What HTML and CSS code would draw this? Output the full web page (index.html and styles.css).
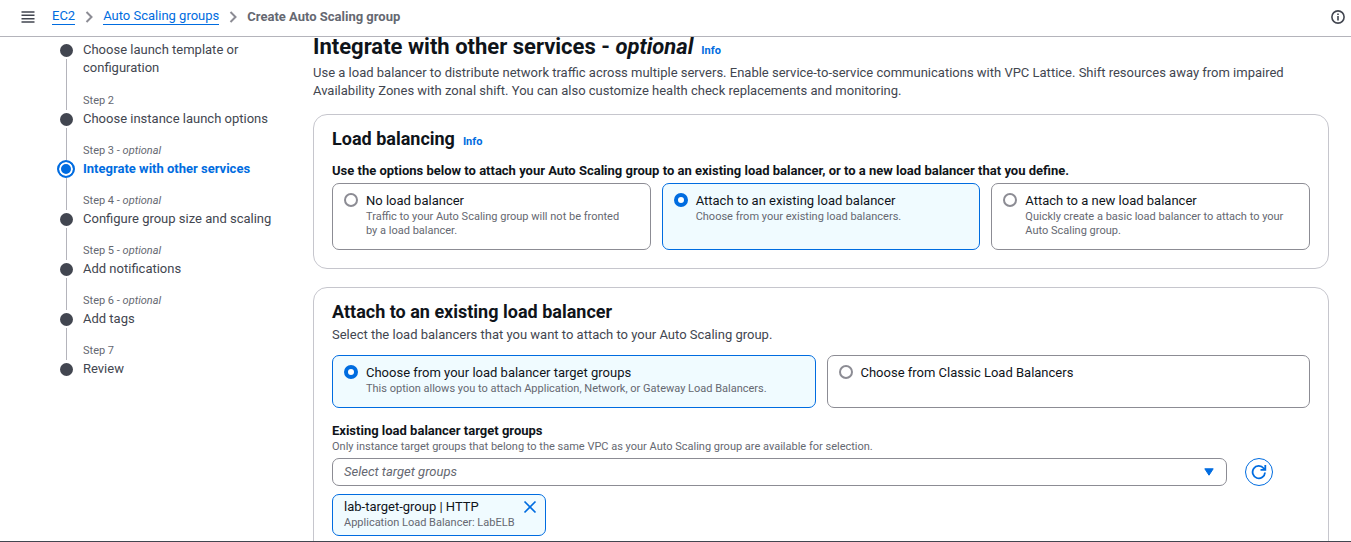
FILE: index.html
```html
<!DOCTYPE html>
<html lang="en">
<head>
<meta charset="utf-8">
<meta name="viewport" content="width=device-width, initial-scale=1">
<title>Create Auto Scaling group</title>
<link rel="stylesheet" href="styles.css">
</head>
<body>
<header class="topbar">
  <button class="icon-button" type="button" aria-label="Open navigation">
    <svg width="14" height="14" viewBox="0 0 14 14"><path d="M.500 2h13M.500 5.300h13M.500 8.700h13M.500 12h13" stroke="#424650" stroke-width="1.500"/></svg>
  </button>
  <nav aria-label="Breadcrumbs">
    <ol class="crumbs">
      <li><a href="#">EC2</a></li>
      <li><svg class="chevron" width="8" height="12" viewBox="0 0 8 12"><path d="M1.500 1l5 5-5 5"/></svg><a href="#">Auto Scaling groups</a></li>
      <li><svg class="chevron" width="8" height="12" viewBox="0 0 8 12"><path d="M1.500 1l5 5-5 5"/></svg><span class="crumb-current" aria-current="page">Create Auto Scaling group</span></li>
    </ol>
  </nav>
  <button class="icon-button info-button" type="button" aria-label="Open help panel">
    <svg width="14" height="14" viewBox="0 0 14 14"><circle cx="7" cy="7" r="6.100" fill="none" stroke="#424650" stroke-width="1.600"/><path d="M7 6v4.500M7 3.500v1.500" stroke="#424650" stroke-width="1.600"/></svg>
  </button>
</header>

<div class="layout">
  <nav class="wizard" aria-label="Steps">
    <ol class="steps">
      <li class="step"><span class="dot"></span><a class="step-title" href="#">Choose launch template or configuration</a><span class="line"></span></li>
      <li class="step"><span class="line"></span><span class="step-label">Step 2</span><span class="dot"></span><a class="step-title" href="#">Choose instance launch options</a><span class="line"></span></li>
      <li class="step current"><span class="line"></span><span class="step-label">Step 3 - <i>optional</i></span><span class="dot"></span><a class="step-title" href="#" aria-current="step">Integrate with other services</a><span class="line"></span></li>
      <li class="step"><span class="line"></span><span class="step-label">Step 4 - <i>optional</i></span><span class="dot"></span><a class="step-title" href="#">Configure group size and scaling</a><span class="line"></span></li>
      <li class="step"><span class="line"></span><span class="step-label">Step 5 - <i>optional</i></span><span class="dot"></span><a class="step-title" href="#">Add notifications</a><span class="line"></span></li>
      <li class="step"><span class="line"></span><span class="step-label">Step 6 - <i>optional</i></span><span class="dot"></span><a class="step-title" href="#">Add tags</a><span class="line"></span></li>
      <li class="step"><span class="line"></span><span class="step-label">Step 7</span><span class="dot"></span><a class="step-title" href="#">Review</a></li>
    </ol>
  </nav>

  <main class="content">
    <div class="page-head">
      <div class="title-row"><h1>Integrate with other services - <i>optional</i></h1><a class="info" href="#">Info</a></div>
      <p>Use a load balancer to distribute network traffic across multiple servers. Enable service-to-service communications with VPC Lattice. Shift resources away from impaired Availability Zones with zonal shift. You can also customize health check replacements and monitoring.</p>
    </div>

    <section class="card">
      <div class="title-row"><h2>Load balancing</h2><a class="info" href="#">Info</a></div>
      <fieldset class="options">
        <legend>Use the options below to attach your Auto Scaling group to an existing load balancer, or to a new load balancer that you define.</legend>
        <div class="tiles">
          <label class="tile"><input type="radio" name="balancer"><span class="tile-title">No load balancer</span><span class="hint">Traffic to your Auto Scaling group will not be fronted by a load balancer.</span></label>
          <label class="tile"><input type="radio" name="balancer" checked><span class="tile-title">Attach to an existing load balancer</span><span class="hint">Choose from your existing load balancers.</span></label>
          <label class="tile"><input type="radio" name="balancer"><span class="tile-title">Attach to a new load balancer</span><span class="hint">Quickly create a basic load balancer to attach to your Auto Scaling group.</span></label>
        </div>
      </fieldset>
    </section>

    <section class="card">
      <h2>Attach to an existing load balancer</h2>
      <p class="card-note">Select the load balancers that you want to attach to your Auto Scaling group.</p>
      <div class="tiles kinds" role="radiogroup" aria-label="Load balancer kind">
        <label class="tile"><input type="radio" name="kind" checked><span class="tile-title">Choose from your load balancer target groups</span><span class="hint">This option allows you to attach Application, Network, or Gateway Load Balancers.</span></label>
        <label class="tile"><input type="radio" name="kind"><span class="tile-title">Choose from Classic Load Balancers</span></label>
      </div>
      <label class="field-label" for="groups">Existing load balancer target groups</label>
      <span class="hint" id="groups-hint">Only instance target groups that belong to the same VPC as your Auto Scaling group are available for selection.</span>
      <div class="select-row">
        <div class="select-box">
          <select id="groups" aria-describedby="groups-hint"><option>Select target groups</option></select>
          <svg width="10" height="8" viewBox="0 0 10 8"><path d="M.8.800h8.400L5 7.200z" fill="#006ce0" stroke="#006ce0" stroke-linejoin="round"/></svg>
        </div>
        <button class="refresh" type="button" aria-label="Refresh target groups">
          <svg width="16" height="16" viewBox="0 0 16 16" fill="none" stroke="#006ce0" stroke-width="1.800"><path d="M14 8.500A6.200 6.200 0 1 1 12.600 4.200L14.200 5.500"/><path d="M14.300 1v4.800H9.500"/></svg>
        </button>
      </div>
      <div class="token">
        <span class="tile-title">lab-target-group | HTTP</span>
        <button class="icon-button" type="button" aria-label="Remove lab-target-group"><svg width="14" height="14" viewBox="0 0 14 14"><path d="M1.500 1.500l11 11M12.500 1.500l-11 11" stroke="#006ce0" stroke-width="1.700"/></svg></button>
        <span class="hint">Application Load Balancer: LabELB</span>
      </div>
    </section>
  </main>
</div>
</body>
</html>
```
FILE: styles.css
```css
* { box-sizing: border-box; }

body {
  margin: 0;
  height: 100vh;
  display: flex;
  flex-direction: column;
  overflow: hidden;
  border-bottom: 1px solid #424650;
  background: #fff;
  color: #0f141a;
  font: 13px/18px Roboto, "Noto Sans", sans-serif;
}

h1, h2, p, ol, fieldset { margin: 0; padding: 0; border: 0; }
ol { list-style: none; }
a { color: #006ce0; text-decoration: none; }
svg { display: block; flex: none; }

.topbar {
  flex: none;
  display: flex;
  align-items: center;
  gap: 17px;
  height: 37px;
  padding: 0 6px 3px 21px;
  border-bottom: 1px solid #b4b4bb;
}
.icon-button { display: block; padding: 0; border: 0; background: none; }
.info-button { margin-left: auto; }
.crumbs, .crumbs li { display: flex; align-items: center; }
.crumbs li + li { margin-left: 10px; }
.crumbs a { line-height: 16px; border-bottom: 1px solid #006ce0; }
.chevron { margin-right: 10px; fill: none; stroke: #8c8c94; stroke-width: 2; }
.crumb-current { color: #656871; font-weight: 700; }

.layout { flex: 1; min-height: 0; display: flex; overflow: hidden; }

.wizard { flex: none; width: 313px; padding: 4px 32px 0 57px; }
.step { display: grid; grid-template-columns: 18px 1fr; column-gap: 8px; }
.step-label { grid-column: 2; color: #656871; font-size: 11px; line-height: 18px; }
.step-title { grid-column: 2; color: #424650; }
.dot {
  grid-column: 1;
  align-self: start;
  justify-self: center;
  width: 13px;
  height: 13px;
  margin: 3px 0 2px;
  border-radius: 50%;
  background: #424650;
}
.line { grid-column: 1; justify-self: center; width: 1px; min-height: 14px; background: #b4b4bb; }
.step:first-child .step-title { grid-row: 1 / 3; }
.step:first-child .line { grid-row: 2; min-height: 33px; }
.current .dot {
  width: 18px;
  height: 18px;
  margin: 0;
  border: 2px solid #006ce0;
  background: #006ce0;
  box-shadow: inset 0 0 0 2px #fff;
}
.current .step-title { color: #006ce0; font-weight: 700; }

.content { flex: 1; min-width: 0; padding-right: 22px; }
.content p { color: #424650; }
.title-row { display: flex; align-items: baseline; gap: 8px; }
h1 { font-size: 22px; line-height: 20px; font-weight: 700; }
h2 { font-size: 18px; line-height: 22px; font-weight: 700; }
.info { font-size: 11px; line-height: 12px; font-weight: 700; }
.page-head { padding: 0 40px 14px 0; }
.page-head .title-row { margin-bottom: 7px; }

.card {
  padding: 13px 18px 18px;
  margin-bottom: 18px;
  border: 1px solid #c6c6cd;
  border-radius: 14px;
}
.card-note { margin-top: 3px; }
.options { margin-top: 12px; min-width: 0; }
legend { padding: 0; margin-bottom: 3px; font-weight: 700; }
.tiles { display: grid; grid-auto-flow: column; grid-auto-columns: minmax(0, 1fr); gap: 11px; }
.kinds { margin: 11px 0 14px; }
.tile {
  display: grid;
  grid-template-columns: 14px 1fr;
  column-gap: 8px;
  align-content: start;
  padding: 8px 18px 11px 11px;
  border: 1px solid #8c8c94;
  border-radius: 7px;
}
.tile:has(:checked) { border-color: #006ce0; background: #f0fbff; }
.tile input {
  appearance: none;
  width: 14px;
  height: 14px;
  margin: 1px 0 0;
  border: 2px solid #8c8c94;
  border-radius: 50%;
  background: #fff;
}
.tile input:checked { border: 4px solid #006ce0; }
.hint { display: block; color: #656871; font-size: 11px; line-height: 14px; }
.tile .hint { grid-column: 2; }

.field-label { display: block; font-weight: 700; }
.select-row { display: flex; gap: 18px; margin: 4px 37px 8px 0; }
.select-box { flex: 1; display: grid; align-items: center; }
.select-box > * { grid-area: 1 / 1; }
.select-box svg { justify-self: end; margin-right: 13px; pointer-events: none; }
select {
  appearance: none;
  width: 100%;
  height: 28px;
  padding: 0 11px;
  border: 1px solid #8c8c94;
  border-radius: 7px;
  background: #fff;
  color: #656871;
  font: italic 13px/18px Roboto, "Noto Sans", sans-serif;
}
.refresh {
  display: grid;
  place-items: center;
  width: 28px;
  height: 28px;
  padding: 0;
  border: 1px solid #006ce0;
  border-radius: 50%;
  background: #fff;
}
.token {
  display: inline-grid;
  grid-template-columns: auto auto;
  column-gap: 9px;
  align-items: center;
  padding: 3px 8px 5px 11px;
  border: 1px solid #006ce0;
  border-radius: 7px;
  background: #f0fbff;
}
```
